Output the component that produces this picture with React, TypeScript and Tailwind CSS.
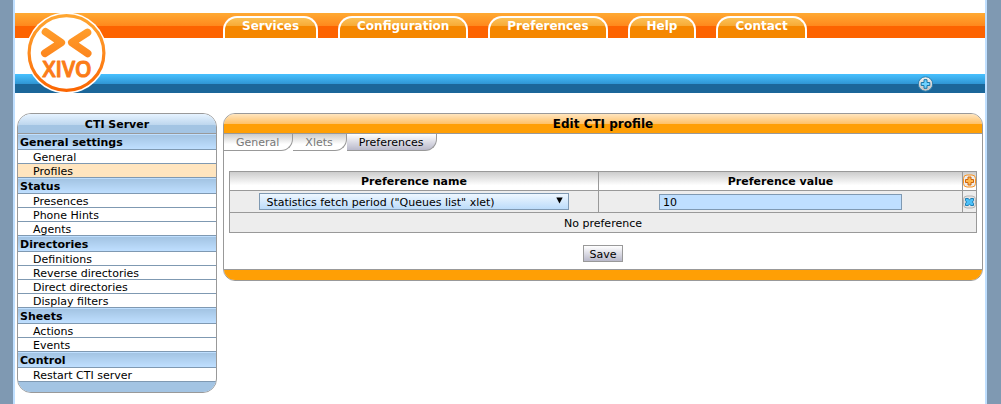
import React from "react";

const mainNav = ["Services", "Configuration", "Preferences", "Help", "Contact"];

const menu = [
  { title: "General settings", items: ["General", "Profiles"] },
  { title: "Status", items: ["Presences", "Phone Hints", "Agents"] },
  { title: "Directories", items: ["Definitions", "Reverse directories", "Direct directories", "Display filters"] },
  { title: "Sheets", items: ["Actions", "Events"] },
  { title: "Control", items: ["Restart CTI server"] },
];

function Logo() {
  return (
    <svg width="81" height="80" viewBox="0 0 81 80" role="img" aria-label="XIVO" className="block">
      <defs>
        <linearGradient id="ring" x1="0" y1="0" x2="0" y2="80" gradientUnits="userSpaceOnUse">
          <stop offset="0" stopColor="#ffa832" />
          <stop offset="0.5" stopColor="#fd8a1e" />
          <stop offset="1" stopColor="#fb6300" />
        </linearGradient>
        <linearGradient id="mark" x1="0" y1="14" x2="0" y2="66" gradientUnits="userSpaceOnUse">
          <stop offset="0" stopColor="#ff9f2c" />
          <stop offset="1" stopColor="#fb7312" />
        </linearGradient>
      </defs>
      <circle cx="40.5" cy="40" r="40.5" fill="#fff" />
      <circle cx="40.5" cy="40" r="37.4" fill="none" stroke="url(#ring)" strokeWidth="3.2" />
      <g fill="none" stroke="url(#mark)" strokeWidth="7.8" strokeLinecap="round" strokeLinejoin="round">
        <path d="M19.6 18.9 L35.2 29.6 L18.9 40.2" />
        <path d="M61.4 19.5 L45.9 29.6 L61.6 40.4" />
      </g>
      <text
        x="41"
        y="64"
        textAnchor="middle"
        fontSize="21"
        className="font-['Open_Sans',sans-serif] font-semibold"
        fill="#fb7c18"
        stroke="#fb7c18"
        strokeWidth="1"
        strokeLinejoin="round"
      >
        XIVO
      </text>
    </svg>
  );
}

function Header() {
  return (
    <header className="relative pt-[13px]">
      <nav
        aria-label="Main"
        className="flex h-[25px] items-end gap-5 bg-[linear-gradient(#ffaa33_0px,#ff881c_13px,#fd6300_13px)] pl-52"
      >
        {mainNav.map((label) => (
          <a
            key={label}
            href="#"
            className="h-[22px] rounded-t-[14px] border-2 border-b-0 border-white bg-[linear-gradient(#fcc156_0px,#f7aa35_8px,#f58700_8px)] bg-origin-padding px-[17px] text-[12px] leading-4 font-bold text-white"
          >
            {label}
          </a>
        ))}
      </nav>
      <div className="mt-9 flex h-[19px] items-center justify-end bg-[linear-gradient(#48c1ff_0px,#2f95d3_10px,#1b6699_10px)] pr-[52px]">
        <button type="button" aria-label="Expand" className="block">
          <svg width="15" height="16" viewBox="0 0 15 16" className="block">
            <defs>
              <linearGradient id="disc" x1="0" y1="0" x2="0" y2="1">
                <stop offset="0" stopColor="#f2f2f2" />
                <stop offset="1" stopColor="#bfbfbf" />
              </linearGradient>
            </defs>
            <circle cx="7.5" cy="8" r="7.2" fill="url(#disc)" stroke="#2b7fae" strokeWidth="1" />
            <path
              d="M6 3.700h3v2.800h2.800v3H9v2.800H6V9.500H3.200v-3H6z"
              fill="#6fd2ff"
              stroke="#1b76a8"
              strokeWidth="1"
            />
          </svg>
        </button>
      </div>
      <a href="#" className="absolute top-[13px] left-[11px]">
        <Logo />
      </a>
    </header>
  );
}

function Sidebar() {
  return (
    <aside className="w-[200px] shrink-0 overflow-hidden rounded-[14px] border border-[#999] bg-white">
      <h2 className="h-5 border-b border-[#999] bg-[linear-gradient(#e6f3ff_0px,#bdd6ee_11px,#a3c4e3_11px)] text-center leading-[22px] font-bold">
        CTI Server
      </h2>
      <nav aria-label="CTI Server">
        {menu.map((group) => (
          <section key={group.title}>
            <h3 className="h-4 border-b border-[#7f99b2] bg-[linear-gradient(#bfdfff_0px,#bfdfff_1px,#a3c4e3_1px,#bfdfff_100%)] pl-0.5 leading-[18px] font-bold">
              {group.title}
            </h3>
            <ul>
              {group.items.map((item) => (
                <li
                  key={item}
                  className={
                    item === "Profiles"
                      ? "h-3.5 border-b border-[#7f99b2] bg-[#ffe5bf]"
                      : "h-3.5 border-b border-[#7f99b2]"
                  }
                >
                  <a href="#" className="block pl-[15px] leading-4">
                    {item}
                  </a>
                </li>
              ))}
            </ul>
          </section>
        ))}
      </nav>
      <div className="h-2.5 bg-[#a3c4e3]" />
    </aside>
  );
}

function AddIcon() {
  return (
    <svg width="13" height="14" viewBox="0 0 13 14" className="block">
      <rect x="0.500" y="1" width="12" height="12" rx="3.500" fill="#ececec" stroke="#f79220" />
      <path d="M5 3h3v2.500h2.500v3H8V11H5V8.500H2.500v-3H5z" fill="#ffb84f" stroke="#cf650c" />
    </svg>
  );
}

function RemoveIcon() {
  return (
    <svg width="13" height="14" viewBox="0 0 13 14" className="block">
      <rect x="0.500" y="1" width="12" height="12" rx="3.500" fill="#e4e4e4" stroke="#b5b5b5" />
      <path
        d="M2.500 3.500h2.500L6.500 4.700 8 3.500h2.500v2.200L9.300 7l1.200 1.300v2.200H8L6.500 9.300 5 10.500H2.500V8.300L3.700 7 2.500 5.700z"
        fill="#4cc0f8"
        stroke="#1f7fb5"
      />
    </svg>
  );
}

const cell = "border border-[#999] p-0";

function ProfilePanel() {
  return (
    <main className="min-w-0 flex-1 overflow-hidden rounded-[12px] border border-[#999] bg-white">
      <h1 className="h-5 border-b border-[#999] bg-[linear-gradient(#ffe5bf_0px,#ffc166_10px,#ff9f05_10px)] text-center text-[12px] leading-5 font-bold">
        Edit CTI profile
      </h1>
      <div className="flex h-[17px] leading-[17px]">
        <a
          href="#"
          className="bg-[linear-gradient(#ccc,#fff_60%)] text-[#777]"
        >
          <span className="block h-[17px] rounded-br-[12px] border-r border-b border-[#999] pr-[13px] pl-3">General</span>
        </a>
        <a href="#" className="bg-[linear-gradient(#ccc,#fff_60%)] text-[#777]">
          <span className="block h-[17px] rounded-br-[12px] border-r border-b border-[#999] pr-[13px] pl-3">Xlets</span>
        </a>
        <a
          href="#"
          aria-current="page"
          className="rounded-br-[12px] border-r border-b border-[#999] bg-[linear-gradient(#fff,#b9b9cb)] pr-[13px] pl-3"
        >
          Preferences
        </a>
      </div>
      <form className="px-[5px] pt-5" onSubmit={(e) => e.preventDefault()}>
        <table className="w-full table-fixed border-collapse text-center">
          <thead>
            <tr className="h-[19px] bg-[linear-gradient(#ccc,#fff_70%)]">
              <th className={`${cell} w-[49.4%]`}>
                <div className="h-[18px] leading-5">Preference name</div>
              </th>
              <th className={cell}>
                <div className="h-[18px] leading-5">Preference value</div>
              </th>
              <th className={`${cell} w-3.5`}>
                <button type="button" aria-label="Add preference" className="block">
                  <AddIcon />
                </button>
              </th>
            </tr>
          </thead>
          <tbody className="bg-[#ededed]">
            <tr className="h-[22px]">
              <td className={cell}>
                <div className="relative mx-auto h-[17px] w-[84%]">
                  <select
                    aria-label="Preference name"
                    className="block h-[17px] w-full appearance-none border border-[#7f99b2] bg-[linear-gradient(#eef7ff,#bcdcfa)] px-1.5 pt-px leading-[15px]"
                  >
                    <option>Statistics fetch period ("Queues list" xlet)</option>
                  </select>
                  <svg
                    width="7"
                    height="7"
                    viewBox="0 0 7 7"
                    className="pointer-events-none absolute top-1 right-1.5"
                    aria-hidden="true"
                  >
                    <path d="M0.300 0.500h6.400L3.500 6.500z" fill="#000" />
                  </svg>
                </div>
              </td>
              <td className={cell}>
                <input
                  type="text"
                  aria-label="Preference value"
                  defaultValue="10"
                  className="mx-auto block h-4 w-[67%] border border-[#7f99b2] bg-[#bfdfff] px-[3px] pt-px leading-[14px]"
                />
              </td>
              <td className={cell}>
                <button type="button" aria-label="Remove preference" className="block">
                  <RemoveIcon />
                </button>
              </td>
            </tr>
            <tr className="h-5">
              <td colSpan={3} className={cell}>
                <div className="h-[19px] leading-[21px]">No preference</div>
              </td>
            </tr>
          </tbody>
        </table>
        <div className="flex justify-center pt-3 pb-[7px]">
          <button
            type="submit"
            className="h-[17px] border border-[#999] bg-[linear-gradient(#fff,#b9b9cb)] px-[5px] pt-px leading-[15px]"
          >
            Save
          </button>
        </div>
      </form>
      <div className="h-[11px] border-t border-[#999] bg-[#ff9f05]" />
    </main>
  );
}

export default function App() {
  return (
    <div className="min-h-screen bg-[#7f99b2] pr-3.5 pl-[13px] font-['DejaVu_Sans',sans-serif] text-[11px] text-black">
      <div className="min-h-screen border-x-2 border-[#bfdfff] bg-white">
        <Header />
        <div className="flex items-start gap-1.5 px-0.5 pt-5 pb-2.5">
          <Sidebar />
          <ProfilePanel />
        </div>
      </div>
    </div>
  );
}
